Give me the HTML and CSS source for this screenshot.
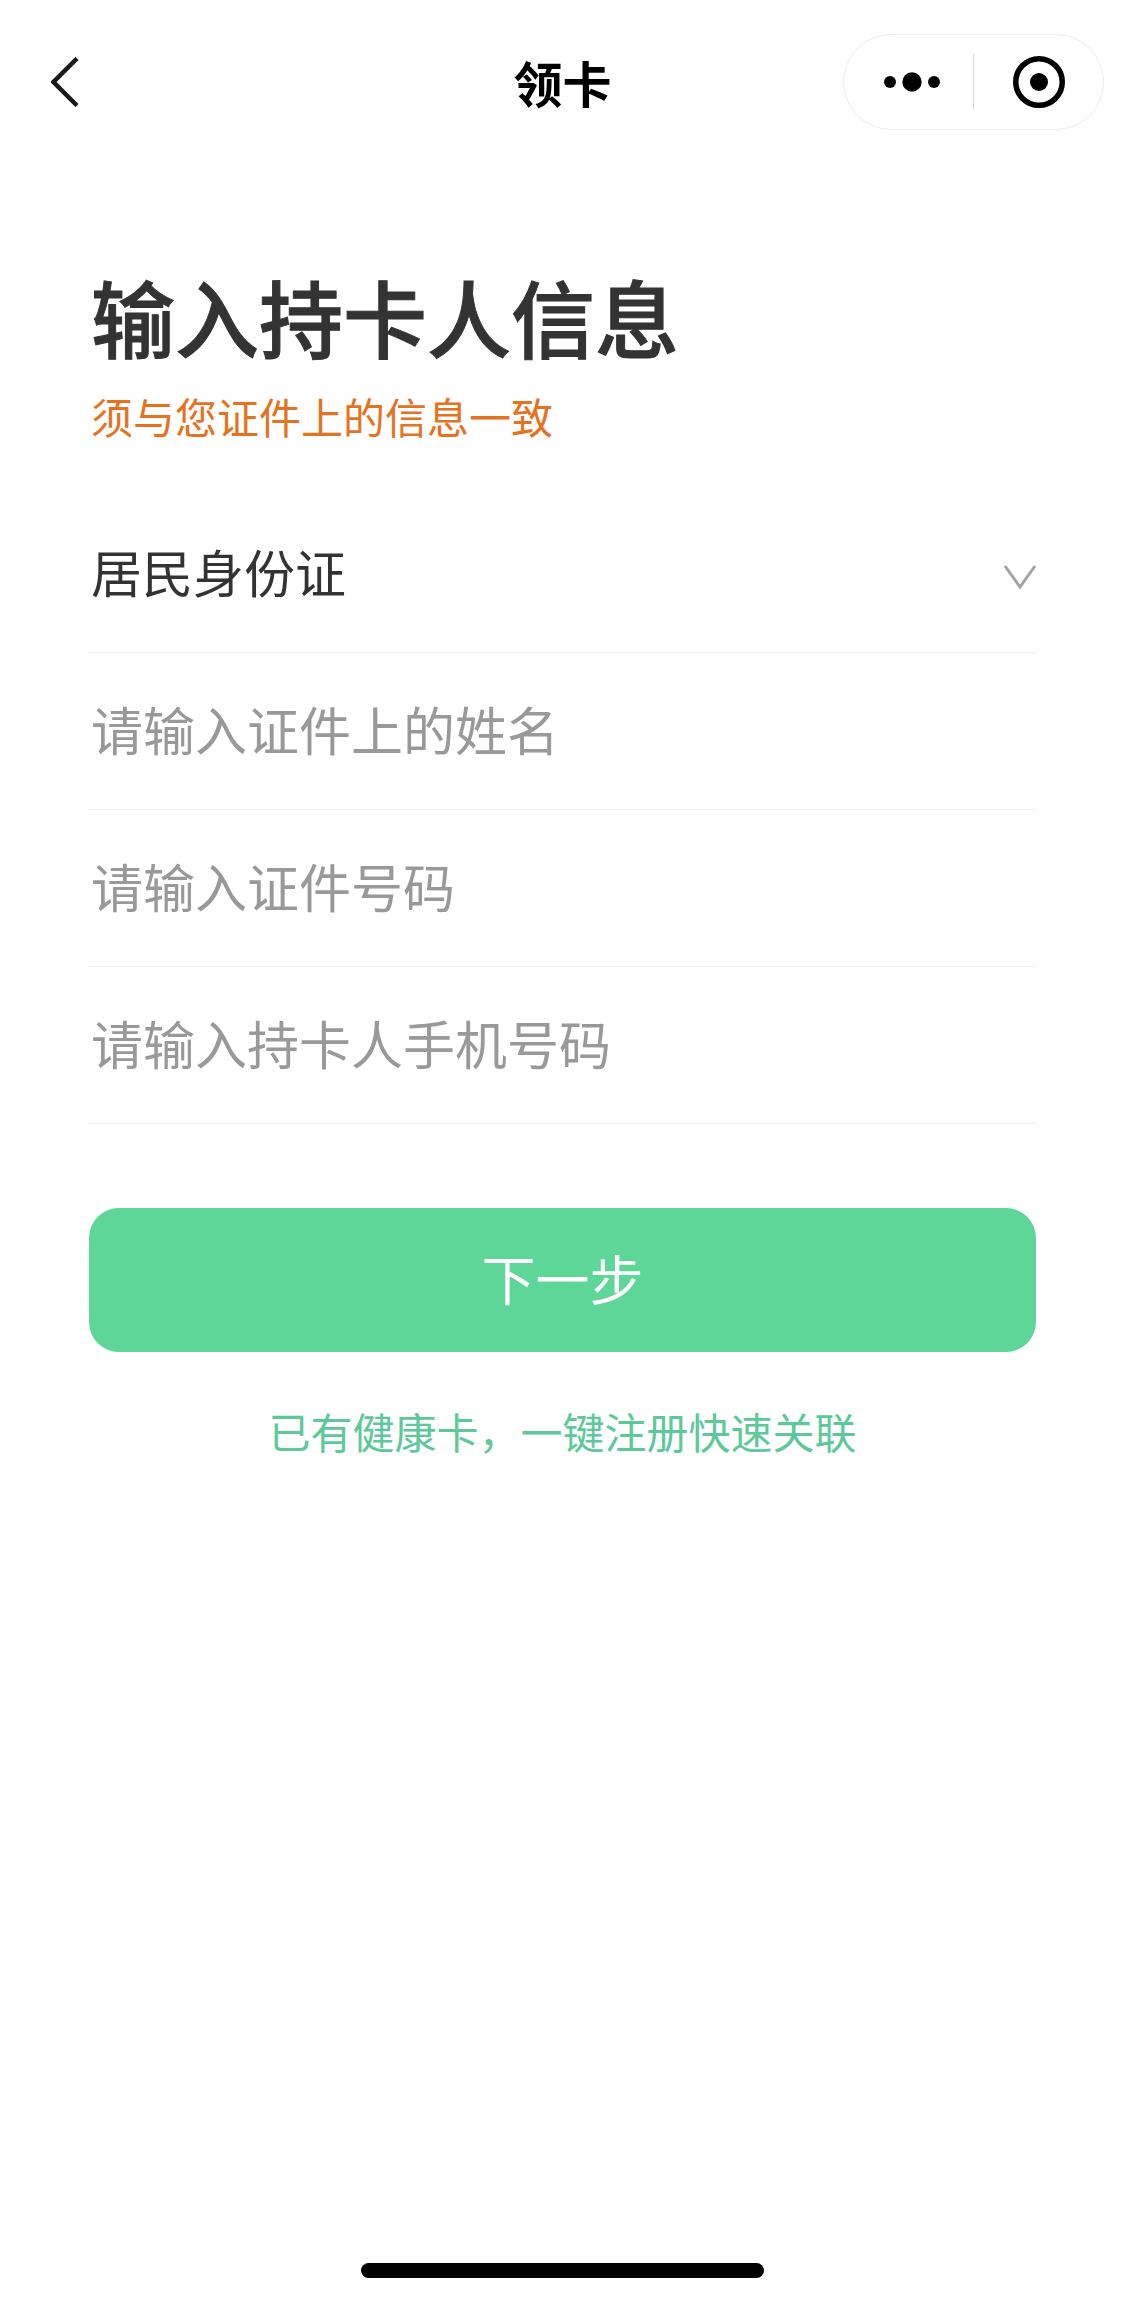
FILE: index.html
```html
<!DOCTYPE html>
<html lang="zh-CN">
<head>
	<meta charset="UTF-8">
	<title>领卡</title>
	<link rel="stylesheet" href="styles.css">
</head>
<body>
	<div id="page">
		<header class="nav">
			<a class="back" href="javascript:;">
				<svg width="30" height="50" viewBox="0 0 30 50"><path d="M26 1.5 2.5 25 26 48.5" fill="none" stroke="#1a1a1a" stroke-width="4.5"/></svg>
			</a>
			<h1 class="nav-title">领卡</h1>
			<div class="capsule">
				<svg class="dots" width="58" height="20" viewBox="0 0 58 20">
					<circle cx="6" cy="10" r="6"/>
					<circle cx="28" cy="10" r="9.7"/>
					<circle cx="50" cy="10" r="6"/>
				</svg>
				<i class="capsule-line"></i>
				<svg class="target" width="54" height="54" viewBox="0 0 54 54">
					<circle cx="27" cy="27" r="23.25" fill="none" stroke="#000" stroke-width="5.5"/>
					<circle cx="27" cy="27" r="9"/>
				</svg>
			</div>
		</header>

		<main class="content">
			<h2 class="title">输入持卡人信息</h2>
			<p class="tip">须与您证件上的信息一致</p>

			<ul class="form">
				<li class="row">
					<span class="value">居民身份证</span>
					<svg class="arrow" width="34" height="26" viewBox="0 0 34 26"><path d="M2 2 17 23 32 2" fill="none" stroke="#a3a3a3" stroke-width="3"/></svg>
				</li>
				<li class="row"><span class="holder">请输入证件上的姓名</span></li>
				<li class="row"><span class="holder">请输入证件号码</span></li>
				<li class="row"><span class="holder">请输入持卡人手机号码</span></li>
			</ul>

			<a class="next" href="javascript:;">下一步</a>
			<a class="link" href="javascript:;">已有健康卡，一键注册快速关联</a>
		</main>

		<div class="home-bar"></div>
	</div>
</body>
</html>
```

FILE: styles.css
```css
* {
	box-sizing: border-box;
}

body {
	margin: 0;
	background: #fff;
	font-family: "Noto Sans CJK SC", "Noto Sans", sans-serif;
}

#page {
	height: 2298px;
	display: flex;
	flex-direction: column;
	overflow: hidden;
}

.nav {
	height: 130px;
	padding: 34px 22px 0 51px;
	display: grid;
	grid-template-columns: 1fr auto 1fr;
	align-items: center;
}

.back {
	width: 30px;
	height: 50px;
	display: block;
}

.back svg {
	display: block;
}

.nav-title {
	margin: 0 0 0 -29px;
	font-size: 49px;
	line-height: 60px;
	font-weight: 700;
	color: #000;
}

.capsule {
	justify-self: end;
	width: 261px;
	height: 96px;
	margin-right: -1px;
	border: 1px solid #ededed;
	border-radius: 48px;
	padding: 0 26px 0 40px;
	display: flex;
	align-items: center;
}

.dots {
	flex: none;
}

.capsule-line {
	width: 1px;
	height: 56px;
	margin: 0 38px 0 31px;
	background: #d9d9d9;
}

.target {
	flex: none;
}

.content {
	padding: 130px 89px 0;
}

.title {
	margin: 0 0 0 2px;
	font-size: 84px;
	line-height: 112px;
	font-weight: 500;
	-webkit-text-stroke: 1px #333;
	color: #333;
}

.tip {
	margin: 15px 0 0 2px;
	font-size: 42px;
	line-height: 58px;
	color: #e5721f;
}

.form {
	margin: 51px 0 0;
	padding: 0;
	list-style: none;
}

.row {
	height: 157px;
	padding: 0 0 6px 2px;
	border-bottom: 1px solid #efefef;
	display: flex;
	align-items: center;
	justify-content: space-between;
	font-size: 52px;
}

.value {
	font-size: 51px;
	color: #333;
}

.holder {
	color: #999;
}

.arrow {
	margin: 12px -1px 0 0;
}

.next {
	margin-top: 84px;
	height: 144px;
	padding-bottom: 6px;
	border-radius: 30px;
	background: #5dd698;
	color: #fff;
	font-size: 54px;
	display: flex;
	align-items: center;
	justify-content: center;
	text-decoration: none;
}

.link {
	margin-top: 50px;
	display: block;
	text-align: center;
	font-size: 42px;
	line-height: 58px;
	color: #5dc99a;
	text-decoration: none;
}

.home-bar {
	width: 403px;
	height: 15px;
	margin: auto auto 20px;
	border-radius: 8px;
	background: #000;
}
```
